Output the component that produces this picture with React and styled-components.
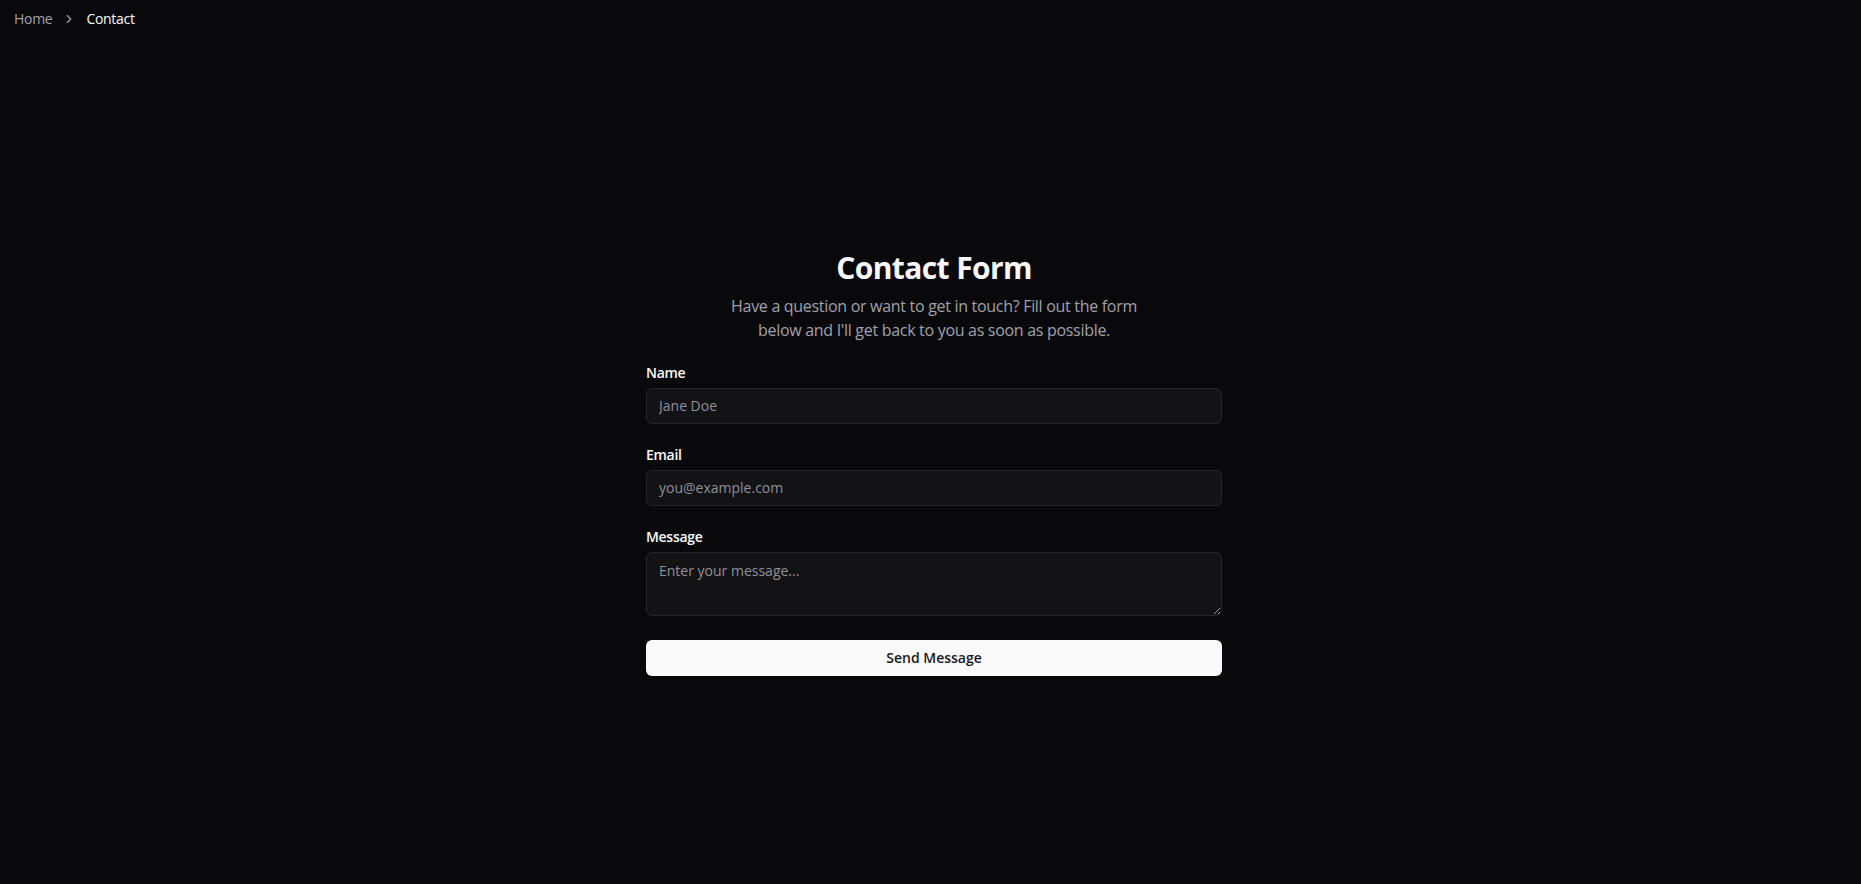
import React from 'react';
import styled, { createGlobalStyle } from 'styled-components';

const GlobalStyle = createGlobalStyle`
  * { box-sizing: border-box; }
  html, body {
    margin: 0;
    padding: 0;
    background: #09090b;
    color: #fafafa;
    font-family: "Segoe UI", "Open Sans", "Noto Sans", sans-serif;
    letter-spacing: -0.3px;
    color-scheme: dark;
  }
`

const Page = styled.div`
  min-height: 100vh;
  display: flex;
  flex-direction: column;
`

const Header = styled.header`
  height: 41px;
  padding: 9px 14px;
`

const Crumbs = styled.ol`
  display: flex;
  align-items: center;
  gap: 10px;
  margin: 0;
  padding: 0;
  list-style: none;
  font-size: 14px;
  line-height: 20px;
`

const Crumb = styled.li`
  color: ${p => (p.$current ? '#fafafa' : '#a1a1aa')};
  display: flex;
  align-items: center;
`

const Main = styled.main`
  flex: 1;
  display: flex;
  align-items: center;
  justify-content: center;
  padding-left: 7px;
`

const Card = styled.div`
  width: 576px;
  display: flex;
  flex-direction: column;
`

const Title = styled.h1`
  margin: 0 0 8px;
  text-align: center;
  font-size: 30px;
  line-height: 36px;
  font-weight: 700;
  letter-spacing: -0.6px;
  color: #fafafa;
`

const Lead = styled.p`
  margin: 0 auto 24px;
  max-width: 448px;
  text-align: center;
  font-size: 16px;
  line-height: 24px;
  color: #a1a1aa;
`

const Form = styled.form`
  display: flex;
  flex-direction: column;
  gap: 24px;
`

const Field = styled.div`
  display: flex;
  flex-direction: column;
  gap: 8px;
`

const Label = styled.label`
  font-size: 14px;
  line-height: 1;
  font-weight: 600;
  color: #fafafa;
`

const Input = styled.input`
  height: 36px;
  width: 100%;
  padding: 4px 12px;
  border: 1px solid #27272a;
  border-radius: 6px;
  background: #131316;
  color: #fafafa;
  font: inherit;
  font-size: 14px;
  outline: none;
  &::placeholder { color: #8f8f98; }
`

const TextArea = styled.textarea`
  min-height: 64px;
  height: 64px;
  width: 100%;
  padding: 8px 12px;
  border: 1px solid #27272a;
  border-radius: 6px;
  background: #131316;
  color: #fafafa;
  font: inherit;
  font-size: 14px;
  line-height: 20px;
  outline: none;
  &::placeholder { color: #8f8f98; }
`

const Button = styled.button`
  height: 36px;
  width: 100%;
  border: none;
  border-radius: 6px;
  background: #fafafa;
  color: #18181b;
  font: inherit;
  font-size: 14px;
  font-weight: 600;
  cursor: pointer;
`

const Chevron = () => (
  <svg width="14" height="14" viewBox="0 0 24 24" fill="none" stroke="#a1a1aa" strokeWidth="2" strokeLinecap="round" strokeLinejoin="round">
    <path d="m9 18 6-6-6-6" />
  </svg>
);

const App = () => {
  return (
    <Page>
      <GlobalStyle />
      <Header>
        <Crumbs>
          <Crumb>Home</Crumb>
          <Crumb><Chevron /></Crumb>
          <Crumb $current>Contact</Crumb>
        </Crumbs>
      </Header>
      <Main>
        <Card>
          <Title>Contact Form</Title>
          <Lead>Have a question or want to get in touch? Fill out the form below and I'll get back to you as soon as possible.</Lead>
          <Form onSubmit={e => e.preventDefault()}>
            <Field>
              <Label htmlFor="name">Name</Label>
              <Input id="name" placeholder="Jane Doe" />
            </Field>
            <Field>
              <Label htmlFor="email">Email</Label>
              <Input id="email" type="email" placeholder="you@example.com" />
            </Field>
            <Field>
              <Label htmlFor="message">Message</Label>
              <TextArea id="message" placeholder="Enter your message..." />
            </Field>
            <Button type="submit">Send Message</Button>
          </Form>
        </Card>
      </Main>
    </Page>
  );
};

export default App;
